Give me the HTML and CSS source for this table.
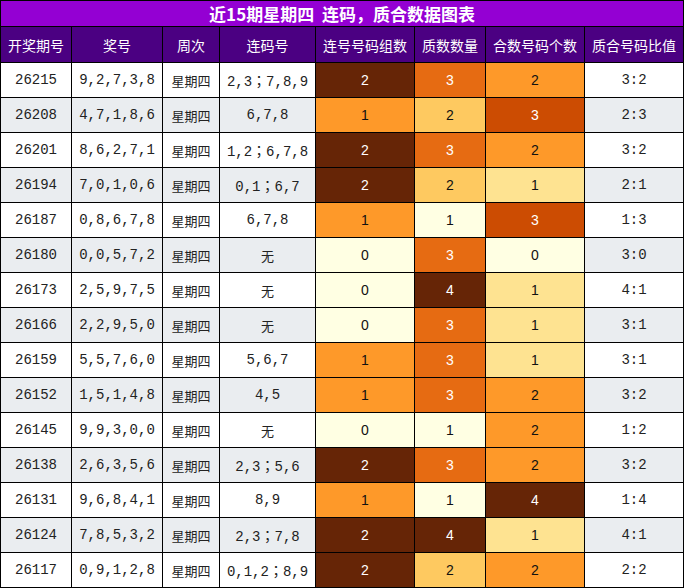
FILE: index.html
```html
<!DOCTYPE html>
<html lang="zh">
<head>
<meta charset="utf-8">
<title>近15期星期四 连码，质合数据图表</title>
<link rel="stylesheet" href="styles.css">
</head>
<body>
<div class="chart">
  <div class="title">近15期星期四&nbsp;&nbsp;连码，质合数据图表</div>
  <div class="row head">
    <div class="c">开奖期号</div><div class="c">奖号</div><div class="c">周次</div><div class="c">连码号</div><div class="c">连号号码组数</div><div class="c">质数数量</div><div class="c">合数号码个数</div><div class="c">质合号码比值</div>
  </div>
  <div class="row">
    <div class="c m">26215</div><div class="c m">9,2,7,3,8</div><div class="c w">星期四</div><div class="c m">2,3；7,8,9</div><div class="c n brown">2</div><div class="c n orange">3</div><div class="c n lorange">2</div><div class="c m">3:2</div>
  </div>
  <div class="row alt">
    <div class="c m">26208</div><div class="c m">4,7,1,8,6</div><div class="c w">星期四</div><div class="c m">6,7,8</div><div class="c n lorange">1</div><div class="c n peach">2</div><div class="c n red">3</div><div class="c m">2:3</div>
  </div>
  <div class="row">
    <div class="c m">26201</div><div class="c m">8,6,2,7,1</div><div class="c w">星期四</div><div class="c m">1,2；6,7,8</div><div class="c n brown">2</div><div class="c n orange">3</div><div class="c n lorange">2</div><div class="c m">3:2</div>
  </div>
  <div class="row alt">
    <div class="c m">26194</div><div class="c m">7,0,1,0,6</div><div class="c w">星期四</div><div class="c m">0,1；6,7</div><div class="c n brown">2</div><div class="c n peach">2</div><div class="c n yellow">1</div><div class="c m">2:1</div>
  </div>
  <div class="row">
    <div class="c m">26187</div><div class="c m">0,8,6,7,8</div><div class="c w">星期四</div><div class="c m">6,7,8</div><div class="c n lorange">1</div><div class="c n cream">1</div><div class="c n red">3</div><div class="c m">1:3</div>
  </div>
  <div class="row alt">
    <div class="c m">26180</div><div class="c m">0,0,5,7,2</div><div class="c w">星期四</div><div class="c w">无</div><div class="c n cream">0</div><div class="c n orange">3</div><div class="c n cream">0</div><div class="c m">3:0</div>
  </div>
  <div class="row">
    <div class="c m">26173</div><div class="c m">2,5,9,7,5</div><div class="c w">星期四</div><div class="c w">无</div><div class="c n cream">0</div><div class="c n brown">4</div><div class="c n yellow">1</div><div class="c m">4:1</div>
  </div>
  <div class="row alt">
    <div class="c m">26166</div><div class="c m">2,2,9,5,0</div><div class="c w">星期四</div><div class="c w">无</div><div class="c n cream">0</div><div class="c n orange">3</div><div class="c n yellow">1</div><div class="c m">3:1</div>
  </div>
  <div class="row">
    <div class="c m">26159</div><div class="c m">5,5,7,6,0</div><div class="c w">星期四</div><div class="c m">5,6,7</div><div class="c n lorange">1</div><div class="c n orange">3</div><div class="c n yellow">1</div><div class="c m">3:1</div>
  </div>
  <div class="row alt">
    <div class="c m">26152</div><div class="c m">1,5,1,4,8</div><div class="c w">星期四</div><div class="c m">4,5</div><div class="c n lorange">1</div><div class="c n orange">3</div><div class="c n lorange">2</div><div class="c m">3:2</div>
  </div>
  <div class="row">
    <div class="c m">26145</div><div class="c m">9,9,3,0,0</div><div class="c w">星期四</div><div class="c w">无</div><div class="c n cream">0</div><div class="c n cream">1</div><div class="c n lorange">2</div><div class="c m">1:2</div>
  </div>
  <div class="row alt">
    <div class="c m">26138</div><div class="c m">2,6,3,5,6</div><div class="c w">星期四</div><div class="c m">2,3；5,6</div><div class="c n brown">2</div><div class="c n orange">3</div><div class="c n lorange">2</div><div class="c m">3:2</div>
  </div>
  <div class="row">
    <div class="c m">26131</div><div class="c m">9,6,8,4,1</div><div class="c w">星期四</div><div class="c m">8,9</div><div class="c n lorange">1</div><div class="c n cream">1</div><div class="c n brown">4</div><div class="c m">1:4</div>
  </div>
  <div class="row alt">
    <div class="c m">26124</div><div class="c m">7,8,5,3,2</div><div class="c w">星期四</div><div class="c m">2,3；7,8</div><div class="c n brown">2</div><div class="c n brown">4</div><div class="c n yellow">1</div><div class="c m">4:1</div>
  </div>
  <div class="row">
    <div class="c m">26117</div><div class="c m">0,9,1,2,8</div><div class="c w">星期四</div><div class="c m">0,1,2；8,9</div><div class="c n brown">2</div><div class="c n peach">2</div><div class="c n lorange">2</div><div class="c m">2:2</div>
  </div>
</div>
</body>
</html>
```

FILE: styles.css
```css
html, body {
  margin: 0;
  padding: 0;
  background: #ffffff;
}

.chart {
  width: 684px;
  box-sizing: border-box;
  display: grid;
  grid-template-columns: 70px 90px 56px 95px 98px 70px 98px 98px;
  grid-template-rows: 25px 35px repeat(15, 34px);
  gap: 1px;
  padding: 1px;
  background: #000000;
}

.title {
  grid-column: 1 / -1;
  background: #9400d3;
  color: #ffffff;
  font-family: "Noto Sans CJK SC", "Noto Sans", sans-serif;
  font-weight: 700;
  font-size: 17px;
  display: flex;
  align-items: center;
  justify-content: center;
  line-height: 1;
}

.row {
  display: contents;
}

.c {
  display: flex;
  align-items: center;
  justify-content: center;
  background: #ffffff;
  color: #222222;
  white-space: nowrap;
  overflow: hidden;
}

.alt > .c {
  background: #eaedf0;
}

.head > .c {
  background: #4b0082;
  color: #ffffff;
  font-family: "Noto Sans CJK SC", "Noto Sans", sans-serif;
  font-size: 14px;
}

.m {
  font-family: "Liberation Mono", "Noto Sans CJK TC", monospace;
  font-size: 14px;
}

.w {
  font-family: "Noto Sans CJK SC", sans-serif;
  font-size: 13px;
}

.n {
  font-family: "Liberation Sans", "Noto Sans", sans-serif;
  font-size: 14px;
}

.row > .c.brown { background: #662506; color: #ffffff; }
.row > .c.red { background: #cc4c02; color: #ffffff; }
.row > .c.orange { background: #e66b12; color: #ffffff; }
.row > .c.lorange { background: #fe9929; color: #111111; }
.row > .c.peach { background: #fec960; color: #111111; }
.row > .c.yellow { background: #fee391; color: #111111; }
.row > .c.cream { background: #ffffe3; color: #111111; }
```
